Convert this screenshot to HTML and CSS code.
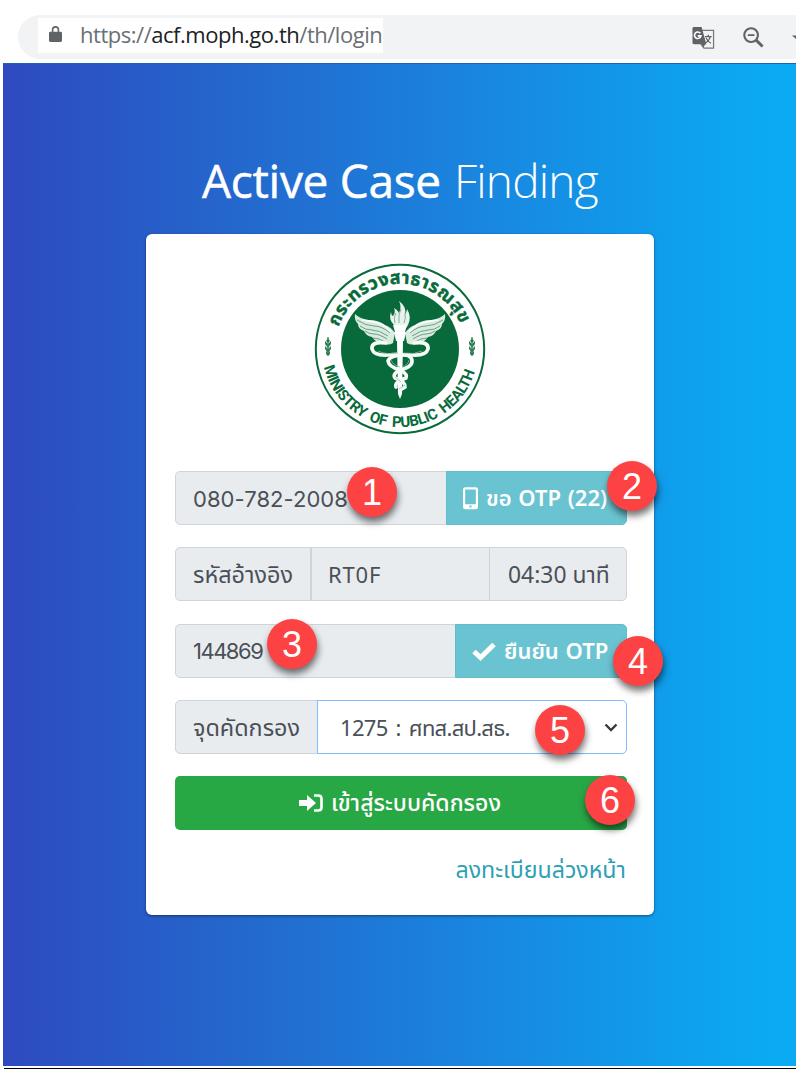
FILE: index.html
```html
<!DOCTYPE html>
<html lang="th">
<head>
<meta charset="utf-8">
<title>Active Case Finding</title>
<link rel="stylesheet" href="styles.css">
</head>
<body>
<header class="toolbar">
  <div class="address">
    <svg class="lock" viewBox="0 0 14 18"><path fill="#5f6368" d="M1.600 6.500H3V4.500a4 4 0 0 1 8 0v2h1.400Q14 6.500 14 8v8q0 1.600-1.600 1.600H1.600Q0 17.600 0 16V8q0-1.500 1.600-1.500zM4.700 6.500h4.600V4.500a2.300 2.300 0 0 0-4.600 0z"/></svg>
    <span class="url">https://<b>acf.moph.go.th</b>/th/login</span>
  </div>
  <div class="tools">
    <svg class="translate" viewBox="0 0 24 24"><path d="M8 4.500h14.500v18.500H12.500L8 17z" fill="#f1f3f4" stroke="#75787c" stroke-width="1.300"/><path d="M2 1h8l5 18H2q-1.500 0-1.500-1.500v-15Q.5 1 2 1zM10 19h4l-2.500 3.500z" fill="#5f6368"/><path d="M8.700 7.600A3.400 3.400 0 1 0 9.300 10.300H6" fill="none" stroke="#fff" stroke-width="1.700"/><path d="M13.500 11h7M17 9v2M19.200 11q-1 4-4.700 6.500M14.700 12.500q1.500 3.500 5 5.500" fill="none" stroke="#5f6368" stroke-width="1.300"/></svg>
    <svg class="magnifier" viewBox="0 0 22 22"><g fill="none" stroke="#5f6368" stroke-width="2.200"><circle cx="8.500" cy="8.500" r="7.200"/><path d="M5 8.500h7" stroke-width="1.700"/><path d="M13.500 13.500l7 7" stroke-width="3"/></g></svg>
    <svg class="caret" viewBox="0 0 4 4"><path d="M0 .5h4v3.500z" fill="#5f6368"/></svg>
  </div>
</header>
<main class="page">
  <h1 class="title"><span class="strong">Active Case</span><span class="light">Finding</span></h1>
  <section class="card">
    <svg class="seal" viewBox="-86 -86 172 172">
      <defs>
        <path id="top" d="M-61.500-22A65.300 65.300 0 0 1 61.500-22"/>
        <path id="bottom" d="M-76 18A78.100 78.100 0 0 0 76 18"/>
        <g id="wing">
          <path d="M5-16Q9-22 15-24Q22-29 31-29Q40-30 45-35Q46-29 42-25Q42-20 36-18Q34-13 28-12Q24-6 17-6Q12-3 7-6z" fill="#d9eae0"/>
          <path d="M10-16q8-7 16-7t17-6M12-13q9-6 16-6t12-4M13-10q8-5 13-5t9-3M15-7q6-4 12-4" fill="none" stroke="#4d9169" stroke-width=".8"/>
          <path d="M9-17Q15-24 22-26T38-29" fill="none" stroke="#fff" stroke-width="1.600"/>
        </g>
        <g id="sprig"><path d="M0-10V9" stroke="#086a3a" stroke-width="1"/><path d="M0-9l2 3-2 2-2-2zM0-3l3-3v3L0 1l-3-4v-3zM0 2l3-3v3L0 6l-3-4v-3zM0 6l2-2v3L0 9l-2-2V4z" fill="#347f56"/></g>
      </defs>
      <circle r="84.200" fill="#fff" stroke="#086a3a" stroke-width="2"/>
      <circle r="59" fill="#086a3a"/>
      <text class="seal-th"><textPath href="#top" textLength="157" lengthAdjust="spacing">กระทรวงสาธารณสุข</textPath></text>
      <text class="seal-en"><textPath href="#bottom" textLength="204">MINISTRY OF PUBLIC HEALTH</textPath></text>
      <use href="#sprig" x="-72" y="-2"/><use href="#sprig" x="72" y="-2"/>
      <use href="#wing"/><use href="#wing" transform="scale(-1 1)"/>
      <path d="M-6-24q-6-6-3-13q0 3 2 4q3-4 1-8q4 2 5 5q3-6 0-12q8 6 6 13q2-2 2-5q5 8 1 16l-2 3z" fill="#e9f3ed"/>
      <path d="M-5-26q-2-6 1-10M-1-26q-1-9 2-14M4-26q2-4 1-10" fill="none" stroke="#7fb296" stroke-width="1"/>
      <path d="M-7-24H7L5-17H6L4-8H3L2 45l-2 5-2-5-1-53h-1l-2-9h1z" fill="#fff"/>
      <g fill="none" stroke="#f6fbf8" stroke-width="3.600" stroke-linecap="round">
        <path d="M-14-6Q-29-8-28 0Q-26 7-12 6Q10 3 12 11Q13 18 0 21Q-8 25-5 29Q6 33 5 38L0 41"/>
        <path d="M14-6Q29-8 28 0Q26 7 12 6Q-10 5-12 12Q-11 18 0 21Q8 25 6 29Q-6 33-4 38"/>
      </g>
      <path d="M-22 2Q-14 6-2 4M22 2Q14 6 4 4M-9 11Q-7 16 0 18M9 11Q8 16 2 18M-5 28l6 5M5 36l-6 4" fill="none" stroke="#8bbb9e" stroke-width=".8"/>
    </svg>

    <div class="row">
      <div class="cell grow"><span class="phone-no">080-782-2008</span></div>
      <button class="cell teal request"><svg class="mobile" viewBox="0 0 16 24"><path fill="#fff" fill-rule="evenodd" d="M2.500 0h11Q16 0 16 2.500v18.500q0 2.500-2.500 2.500h-11Q0 23.500 0 21V2.500Q0 0 2.500 0zM2.300 2.500v15.500h11.400V2.500zM8 19.200a1.200 1.200 0 1 0 .01 0z"/></svg><span class="request-label">ขอ OTP (22)</span></button>
      <i class="badge b1">1</i><i class="badge b2">2</i>
    </div>
    <div class="row">
      <div class="cell ref"><span class="thai">รหัสอ้างอิง</span></div>
      <div class="cell grow code"><span class="code-text">RT0F</span></div>
      <div class="cell time"><span class="time-label">04:30 นาที</span></div>
    </div>
    <div class="row">
      <div class="cell grow"><span class="otp-no">144869</span></div>
      <button class="cell teal confirm"><svg class="check" viewBox="0 0 24 18"><path d="M2 9.500l6.500 6L22 2.500" fill="none" stroke="#fff" stroke-width="5"/></svg><span class="confirm-label">ยืนยัน OTP</span></button>
      <i class="badge b3">3</i><i class="badge b4">4</i>
    </div>
    <div class="row">
      <div class="cell point"><span class="thai">จุดคัดกรอง</span></div>
      <div class="cell grow select"><span class="select-label">1275 : ศทส.สป.สธ.</span><svg class="chevron" viewBox="0 0 14 9"><path d="M1.500 1.500L7 7l5.500-5.500" fill="none" stroke="#343a40" stroke-width="2.400"/></svg></div>
      <i class="badge b5">5</i>
    </div>
    <div class="row">
      <button class="submit"><svg class="enter" viewBox="0 0 24 18"><path d="M0 6h8V1l9 8-9 8v-5H0z" fill="#fff"/><path d="M15 1.500h4q3.500 0 3.500 3v9q0 3-3.500 3h-4" fill="none" stroke="#fff" stroke-width="2.600"/></svg><span class="submit-label">เข้าสู่ระบบคัดกรอง</span></button>
      <i class="badge b6">6</i>
    </div>
    <a class="register"><span class="register-label">ลงทะเบียนล่วงหน้า</span></a>
  </section>
</main>
<div class="rule"></div>
</body>
</html>
```
FILE: styles.css
```css
* { box-sizing: border-box; }
body { margin: 0; width: 800px; height: 1072px; overflow: hidden; background: #fff; font-family: "Noto Sans", "Noto Sans Thai", sans-serif; }
svg { display: block; flex: none; overflow: visible; }

.toolbar { margin: 15px 4px 4px 18px; height: 44px; padding: 3px 0 0 20px; display: flex; justify-content: space-between; align-items: flex-start; background: #f1f3f4; border-radius: 22px 0 0 22px; overflow: hidden; }
.address { display: flex; align-items: center; width: 345px; height: 35px; padding: 0 0 3px 11px; background: #fff; }
.lock { width: 13px; height: 18px; }
.url { margin-left: 18px; font: 22px/30px "Open Sans", sans-serif; letter-spacing: -.47px; color: #6b7075; white-space: nowrap; }
.url b { font-weight: 400; color: #202124; }
.tools { display: flex; align-items: center; height: 38px; }
.translate { width: 23px; height: 23px; }
.magnifier { width: 21px; height: 21px; margin-left: 28px; }
.caret { width: 4px; height: 4px; margin-left: 28px; }

.page { margin: 0 4px 0 3px; height: 1003px; padding: 83px 142px 0 143px; background: linear-gradient(90deg, #2e4abf 0%, #236bcf 33%, #1888e0 62%, #0aabf2 97%, #0aabf2 100%); border-top: 1px solid #1f5fb8; }
.title { display: flex; margin: 0; padding-left: 56px; height: 87px; font: 400 46px/66px "Open Sans", sans-serif; color: #fff; white-space: nowrap; }
.strong { letter-spacing: -.3px; -webkit-text-stroke: .5px #fff; }
.light { margin-left: 13px; font-weight: 300; letter-spacing: -.8px; }
.card { width: 508px; height: 681px; padding: 29px 27px 0 29px; background: #fff; border-radius: 6px; box-shadow: 0 1px 3px rgba(0,0,0,.45); }
.seal { width: 172px; height: 172px; margin: 0 auto 36px 139px; }
.seal-th { font: 700 18px "Noto Sans Thai", "Noto Sans", sans-serif; fill: #086a3a; stroke: #086a3a; stroke-width: .4px; }
.seal-en { font: 700 15px Roboto, sans-serif; fill: #086a3a; word-spacing: 3px; }

.row { position: relative; display: flex; height: 54px; margin-bottom: 22.400px; font-size: 22px; color: #495057; }
.cell { display: flex; align-items: center; padding: 0 17px; font: inherit; color: inherit; background: #e9ecef; border: 1px solid #ced4da; white-space: nowrap; }
.cell + .cell { margin-left: -1px; }
.cell:first-child { border-radius: 5px 0 0 5px; }
.cell:nth-child(2):not(.code), .time { border-radius: 0 5px 5px 0; }
.grow { flex: 1; }
.thai { font-size: 23.400px; padding-top: 3px; }
.phone-no { font: 22px Inter, sans-serif; padding-top: 1px; letter-spacing: .05px; }
.otp-no { font: 22px Inter, sans-serif; padding-top: 1px; letter-spacing: -1.500px; }
.code-text { letter-spacing: .8px; margin-left: -1px; }
.time-label { font-size: 22.900px; padding: 3px 0 0 1px; }
.teal { color: #fff; background: #6ac3d0; border-color: #62bccb; font-weight: 600; }
.teal.cell { padding: 0 0 0 16px; }
.request { width: 181px; }
.request-label, .confirm-label { padding-top: 2px; word-spacing: 1px; }
.mobile { width: 15px; height: 23px; margin-right: 8px; }
.confirm { width: 172px; }
.check { width: 24px; height: 18px; margin-right: 8px; }
.ref { width: 136px; }
.code { border-left-width: 2px; }
.time { width: 138px; }
.point { width: 143px; }
.select { background: #fff; border-color: #80bdff; padding: 0 8px 0 22px; justify-content: space-between; }
.select-label { padding-top: 4px; letter-spacing: -.7px; word-spacing: 3px; }
.chevron { width: 14px; height: 9px; }
.submit { flex: 1; display: flex; justify-content: center; align-items: center; margin-top: -1px; height: 54px; padding: 0 2px 0 0; border: 0; border-radius: 5px; background: #28a745; color: #fff; font: inherit; font-weight: 500; }
.submit-label { font-size: 23px; padding-top: 2px; }
.enter { width: 24px; height: 18px; margin-right: 8px; }
.register { display: flex; justify-content: flex-end; height: 36px; padding-right: 1px; align-items: center; font-size: 23.200px; color: #2f9fb5; }

.badge { position: absolute; width: 50px; height: 50px; border-radius: 50%; background: #fd4244; color: #fff; font: normal 36px/52px "Liberation Sans", sans-serif; text-align: center; box-shadow: 1px 5px 7px rgba(0,0,0,.55); }
.b1 { left: 172px; top: -4px; }
.b2 { left: 432px; top: -10px; }
.b3 { left: 92px; top: -5px; }
.b4 { left: 438px; top: 12px; }
.b5 { left: 360px; top: 5px; }
.b6 { left: 410px; top: -2px; }
.rule { height: 1px; margin: 2px 4px 0; background: #000; }
```
